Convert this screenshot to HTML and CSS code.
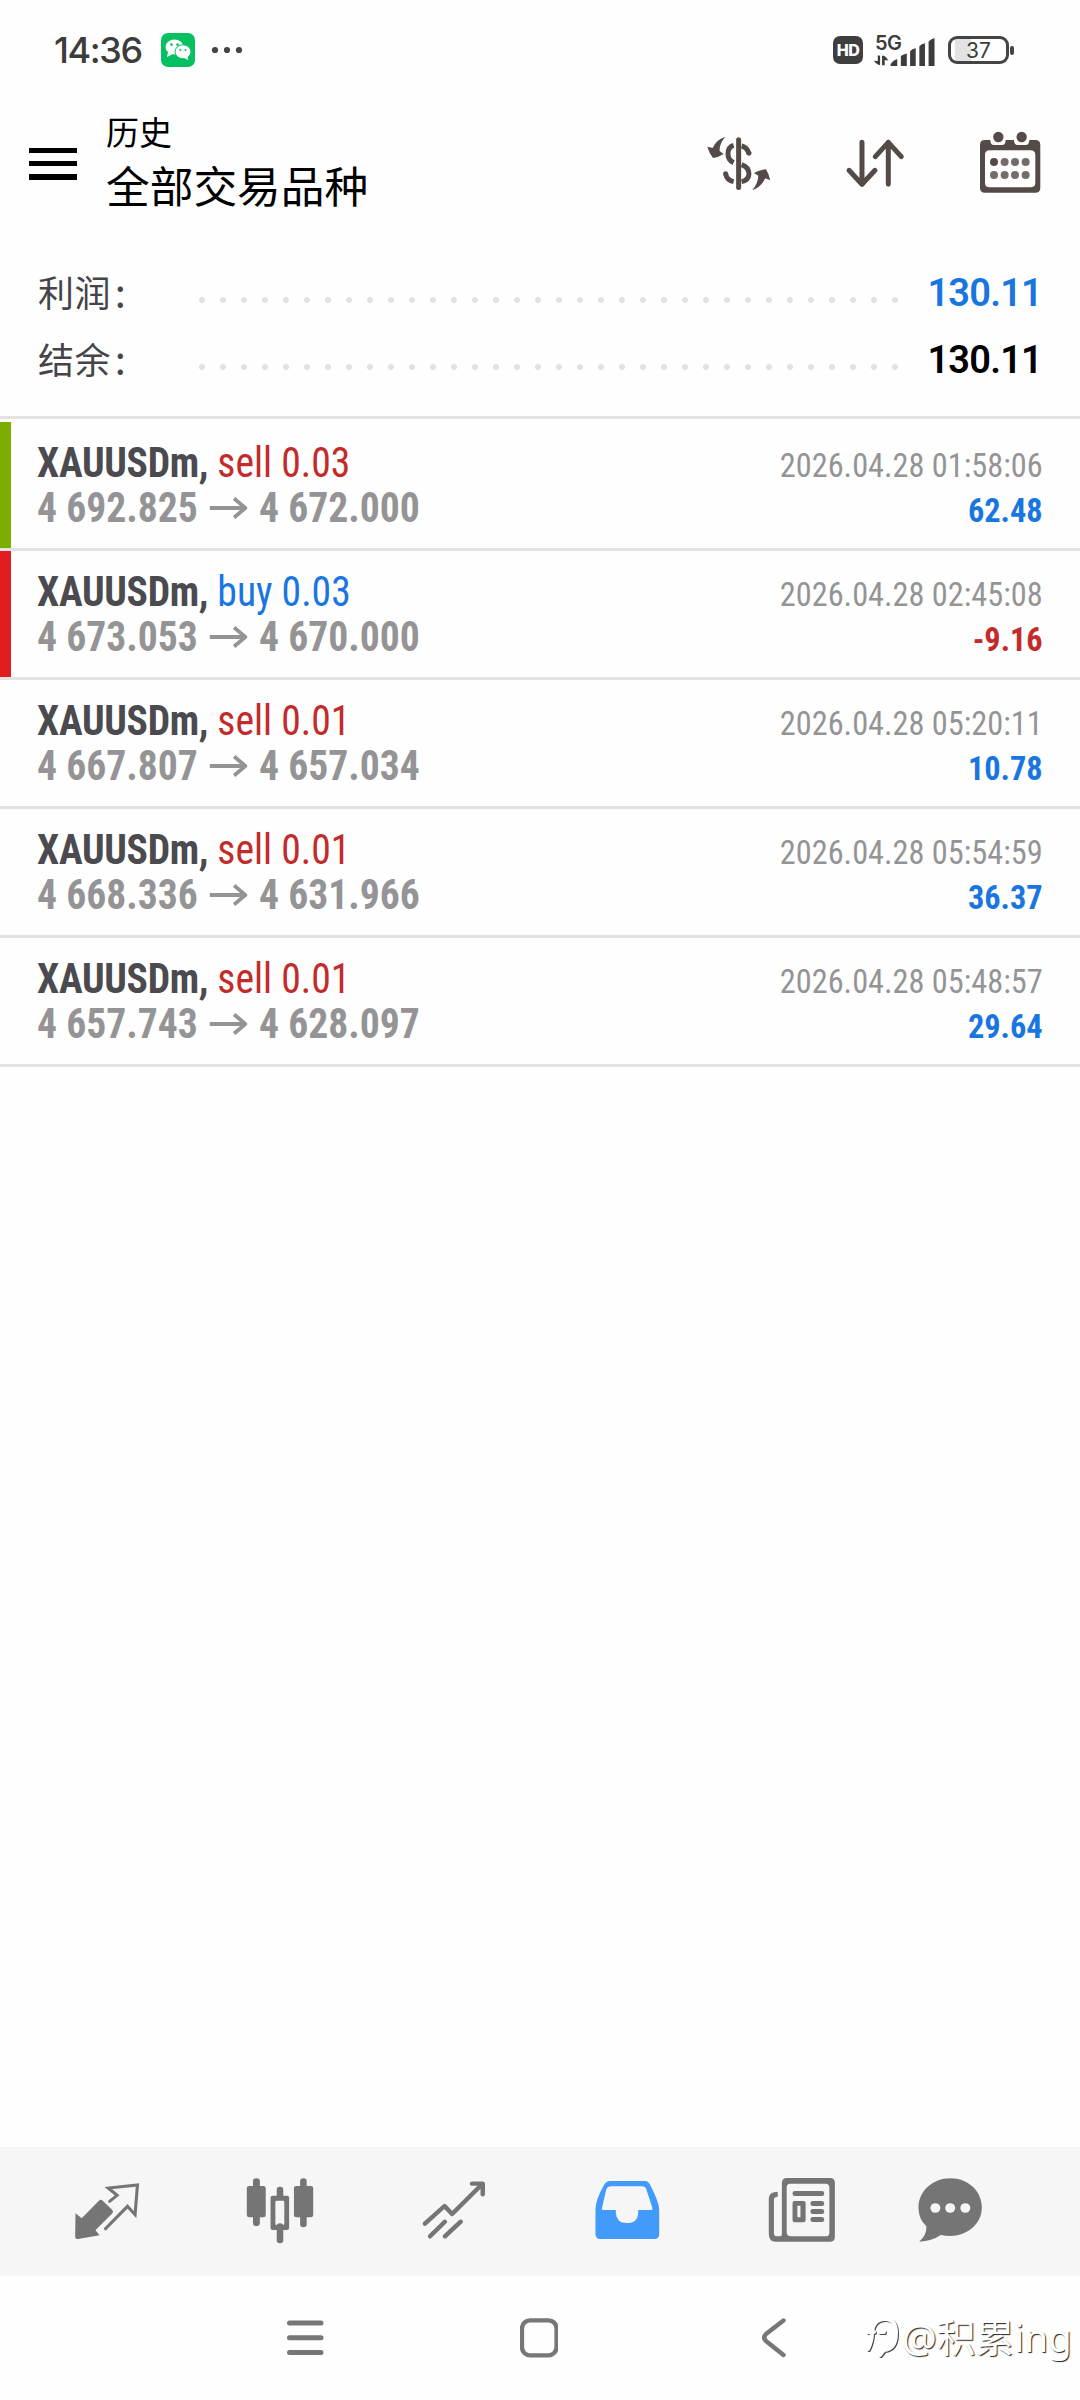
FILE: index.html
```html
<!DOCTYPE html>
<html lang="zh-CN">
<head>
<meta charset="utf-8">
<title>历史</title>
<link rel="stylesheet" href="styles.css">
</head>
<body>
<div class="screen">
  <div class="status">
    <span class="clock">14:36</span>
    <svg class="wechat" viewBox="0 0 34 34"><rect width="34" height="34" rx="7" fill="#07c05f"/><ellipse cx="13.5" cy="14" rx="9" ry="7.5" fill="#fff"/><path d="M7 19l-1 5 5-2.5z" fill="#fff"/><ellipse cx="22" cy="18.8" rx="8" ry="7" fill="#fff" stroke="#07c05f" stroke-width="1"/><path d="M23 25l4 2-.5-4z" fill="#fff"/><g fill="#07c05f"><circle cx="10.5" cy="11.6" r="1.3"/><circle cx="16.5" cy="11.6" r="1.3"/><circle cx="19.3" cy="17" r="1.1"/><circle cx="24.6" cy="17" r="1.1"/></g></svg>
    <svg class="more" viewBox="0 0 32 8"><g fill="#444"><circle cx="4" cy="4" r="3.1"/><circle cx="16" cy="4" r="3.1"/><circle cx="28" cy="4" r="3.1"/></g></svg>
    <span class="hd">HD</span>
    <div class="signal">
      <span class="net">5G</span>
      <svg class="bars" viewBox="580 95 190 100"><g fill="#3c3c3c"><path d="M633 192V186q8-12 20-15v21zM664 192v-30q8-6 18-8v38zM692 192v-45q6-7 17-9v54zM720 192v-60q6-7 17-9v69zM748 192v-74q6-8 18-11v85zM594 160h7v29h-4q-9-4-15-13l12 1zM607 161h6q8 5 13 14l-11-1v16h-8z"/></g></svg>
    </div>
    <div class="battery"><span>37</span></div>
  </div>

  <header class="header">
    <div class="menu"><i></i><i></i><i></i></div>
    <div class="titles"><span class="small">历史</span><span class="big">全部交易品种</span></div>
    <div class="actions">
      <svg class="ic-money" viewBox="80 390 200 190" fill="none" stroke="#544a48">
        <path d="M178 419V563" stroke-width="15" stroke-linecap="round"/>
        <path d="M163 436Q145 441 146 463Q147 481 163 488M187 438Q204 442 209 461M139 522Q143 541 163 545M187 494Q209 502 209 522Q208 541 187 545" stroke-width="15"/>
        <circle cx="209" cy="460" r="7.5" fill="#544a48" stroke="none"/><circle cx="139" cy="521" r="7.5" fill="#544a48" stroke="none"/>
        <path d="M138 411Q113 417 100 444L84 440Q89 458 101 474Q118 472 133 462L121 453Q120 430 138 411ZM219 570Q245 562 258 535L273 541Q270 523 260 508Q242 508 224 519L237 527Q237 549 219 570Z" fill="#544a48" stroke="none"/>
      </svg>
      <svg class="ic-sort" viewBox="490 390 190 190" fill="none" stroke="#544a48" stroke-width="15" stroke-linecap="round" stroke-linejoin="round"><path d="M547 427V552M508 511L547 553L586 511M626 553V427M587 470L626 427L665 470"/></svg>
      <svg class="ic-cal" viewBox="895 390 190 190" fill="#544a48">
        <path fill-rule="evenodd" d="M916 420H932Q932 435 943 435H967Q978 435 978 420H1003Q1003 435 1014 435H1038Q1049 435 1049 420H1067Q1082 420 1082 435V563Q1082 578 1067 578H916Q901 578 901 563V435Q901 420 916 420ZM930 451Q916 451 916 465V548Q916 562 930 562H1053Q1067 562 1067 548V465Q1067 451 1053 451Z"/>
        <circle cx="956" cy="411" r="15.5"/><circle cx="1026" cy="411" r="15.5"/><circle cx="943" cy="486" r="12"/>
        <g fill="#746c68"><circle cx="975" cy="486" r="12"/><circle cx="1006" cy="486" r="12"/><circle cx="1038" cy="486" r="12"/><circle cx="943" cy="525" r="12"/><circle cx="975" cy="525" r="12"/><circle cx="1006" cy="525" r="12"/><circle cx="1038" cy="525" r="12"/></g>
      </svg>
    </div>
  </header>

  <section class="summary">
    <div class="sum"><span class="label">利润<span class="colon">:</span></span><span class="dots"></span><b class="blue">130.11</b></div>
    <div class="sum"><span class="label">结余<span class="colon">:</span></span><span class="dots"></span><b>130.11</b></div>
  </section>

  <main class="deals">
    <div class="deal win">
      <div class="line"><span class="sym"><b>XAUUSDm,</b> <span class="red">sell 0.03</span></span><span class="date">2026.04.28 01:58:06</span></div>
      <div class="line two"><span class="price"><b>4 692.825</b><svg class="arr" viewBox="0 0 40 22"><path d="M0 11H38M26 1.5L38 11L26 20.500"/></svg><b>4 672.000</b></span><b class="pl blue">62.48</b></div>
    </div>
    <div class="deal loss">
      <div class="line"><span class="sym"><b>XAUUSDm,</b> <span class="blue">buy 0.03</span></span><span class="date">2026.04.28 02:45:08</span></div>
      <div class="line two"><span class="price"><b>4 673.053</b><svg class="arr" viewBox="0 0 40 22"><path d="M0 11H38M26 1.5L38 11L26 20.500"/></svg><b>4 670.000</b></span><b class="pl red">-9.16</b></div>
    </div>
    <div class="deal">
      <div class="line"><span class="sym"><b>XAUUSDm,</b> <span class="red">sell 0.01</span></span><span class="date">2026.04.28 05:20:11</span></div>
      <div class="line two"><span class="price"><b>4 667.807</b><svg class="arr" viewBox="0 0 40 22"><path d="M0 11H38M26 1.5L38 11L26 20.500"/></svg><b>4 657.034</b></span><b class="pl blue">10.78</b></div>
    </div>
    <div class="deal">
      <div class="line"><span class="sym"><b>XAUUSDm,</b> <span class="red">sell 0.01</span></span><span class="date">2026.04.28 05:54:59</span></div>
      <div class="line two"><span class="price"><b>4 668.336</b><svg class="arr" viewBox="0 0 40 22"><path d="M0 11H38M26 1.5L38 11L26 20.500"/></svg><b>4 631.966</b></span><b class="pl blue">36.37</b></div>
    </div>
    <div class="deal">
      <div class="line"><span class="sym"><b>XAUUSDm,</b> <span class="red">sell 0.01</span></span><span class="date">2026.04.28 05:48:57</span></div>
      <div class="line two"><span class="price"><b>4 657.743</b><svg class="arr" viewBox="0 0 40 22"><path d="M0 11H38M26 1.5L38 11L26 20.500"/></svg><b>4 628.097</b></span><b class="pl blue">29.64</b></div>
    </div>
  </main>

  <nav class="tabs">
    <svg preserveAspectRatio="none" viewBox="205 135 215 215"><path d="M221 250L239 265L289 212Q295 207 300 212L328 240Q332 245 328 250L279 301L291 316L228 327Q220 328 220 320Z" fill="#757575"/><path d="M320 214L342 196L316 174L401 165L394 254L372 229L308 296" fill="none" stroke="#757575" stroke-width="9" stroke-linecap="round"/></svg>
    <svg preserveAspectRatio="none" viewBox="706 135 215 215" fill="#757575"><rect x="735" y="145" width="20" height="143" rx="9"/><rect x="717" y="168" width="55" height="94" rx="7"/><rect x="872" y="145" width="19" height="147" rx="9"/><rect x="854" y="168" width="56" height="94" rx="7"/><rect x="804" y="170" width="19" height="40" rx="9"/><rect x="804" y="280" width="19" height="60" rx="9"/><path fill-rule="evenodd" d="M792 197H834Q840 197 840 203V294Q840 300 834 300H792Q786 300 786 294V203Q786 197 792 197ZM804 212Q800 212 800 216V281Q800 285 804 285H822Q826 285 826 281V216Q826 212 822 212Z"/></svg>
    <svg preserveAspectRatio="none" viewBox="1208 135 215 215" fill="none" stroke="#757575" stroke-width="13" stroke-linecap="round" stroke-linejoin="round"><path d="M1231 281L1288 228L1310 252L1394 166M1246 319L1289 275M1289 319L1335 275M1368 161H1399V193"/><path d="M1385 160h15v20z" fill="#757575" stroke-width="6"/></svg>
    <svg preserveAspectRatio="none" viewBox="145 135 215 215"><path fill-rule="evenodd" fill="#429bfb" d="M201 153H306Q314 153 318 161Q346 215 346 239V313Q346 327 332 327H175Q161 327 161 313V239Q161 207 188 161Q193 153 201 153ZM207 169Q196 169 192 179L180 233Q178 240 184 240H220V248Q222 279 252 279Q284 279 285 248V240H322Q328 240 326 233L309 179Q305 169 297 169Z"/></svg>
    <svg class="news" preserveAspectRatio="none" viewBox="653 135 215 215"><path fill="#757575" fill-rule="evenodd" d="M717 144H842Q856 144 856 158V321Q856 335 842 335H684Q664 335 664 312V204Q666 185 690 185V200Q679 201 679 208V311Q680 319 688 319H697Q702 319 702 312V158Q702 144 717 144ZM726 161Q716 161 716 172V306Q716 319 729 319H829Q840 319 840 308V172Q840 161 829 161Z"/><g fill="#757575"><rect x="733" y="183" width="92" height="15" rx="7"/><path fill-rule="evenodd" d="M739 213H765Q771 213 771 219V271Q771 277 765 277H739Q733 277 733 271V219Q733 213 739 213ZM747 227V262H756V227Z"/><rect x="785" y="213" width="40" height="15" rx="7"/><rect x="785" y="237" width="40" height="15" rx="7"/><rect x="785" y="261" width="40" height="15" rx="7"/></g></svg>
    <svg class="last" preserveAspectRatio="none" viewBox="1085 135 215 215"><path fill="#757575" d="M1193 145C1246 145 1285 184 1285 232C1285 285 1239 318 1194 318Q1179 318 1166 315Q1140 333 1103 335Q1125 316 1124 289C1107 272 1101 254 1101 232C1101 184 1142 145 1193 145Z"/><g fill="#f6f6f6"><circle cx="1150" cy="234" r="14.5"/><circle cx="1193" cy="234" r="14.5"/><circle cx="1237" cy="234" r="14.5"/></g></svg>
  </nav>

  <div class="sysnav">
    <svg class="recent" viewBox="0 0 37 36" stroke="#777" stroke-width="5" stroke-linecap="round"><path d="M2.5 3H34M2.5 17.8H34M2.5 32.5H34"/></svg>
    <svg class="home" viewBox="0 0 38 40"><rect x="2" y="2.3" width="34.5" height="35" rx="8" fill="none" stroke="#777" stroke-width="4.3"/></svg>
    <svg class="back" viewBox="0 0 24 40"><path d="M21.500 2.500L4 16Q.5 19.500 4 23L21.500 37" fill="none" stroke="#777" stroke-width="4.4" stroke-linecap="round"/></svg>
    <div class="mark">
      <svg viewBox="0 0 36 46" fill="none" stroke-linecap="round"><path stroke="#444" stroke-width="4" d="M5 36Q9 28 9 20Q10 6 22 6Q33 6 33 20Q33 36 21 37L17 42M5 19H11M17 19H21"/><path transform="translate(-1 -1)" stroke="#fff" stroke-width="4" d="M5 36Q9 28 9 20Q10 6 22 6Q33 6 33 20Q33 36 21 37L17 42M5 19H11M17 19H21"/></svg>
      <span>@积累ing</span>
    </div>
  </div>
</div>
</body>
</html>
```
FILE: styles.css
```css
* { box-sizing: border-box; }
body { margin: 0; background: #fefefe; }
svg { display: block; flex: none; }
.screen { width: 1080px; height: 2400px; display: flex; flex-direction: column; overflow: hidden; font-family: Roboto, "Noto Sans CJK SC", sans-serif; color: #000; }
.red { color: #c32b2b; }
.blue { color: #1976e0; }

.status { height: 100px; display: flex; align-items: center; padding-left: 54px; color: #3c3c3c; }
.clock { width: 107px; font: 500 36px/40px Inter, sans-serif; letter-spacing: -1.400px; }
.wechat { width: 34px; height: 34px; }
.more { width: 32px; height: 8px; margin-left: 16px; }
.hd { width: 30px; height: 28px; margin-left: 590px; border-radius: 7px; background: #3f3f3f; color: #fff; font: 800 16px/28px Inter, sans-serif; text-align: center; letter-spacing: -.5px; }
.signal { position: relative; width: 63px; height: 33px; margin-left: 10px; }
.net { position: absolute; left: 2px; top: -1px; font: 600 20px/20px Inter, sans-serif; letter-spacing: -.5px; }
.bars { width: 63px; height: 33px; }
.battery { position: relative; width: 61px; height: 28px; margin-left: 12px; border: 3px solid #444; border-radius: 9px; background: linear-gradient(90deg, transparent 4px, #e3e3e3 4px 20px, transparent 20px); font: 400 21px/23px Inter, sans-serif; text-align: center; }
.battery::after { content: ""; position: absolute; left: 59px; top: 7px; width: 4px; height: 9px; border-radius: 2px; background: #444; }

.header { height: 126px; display: flex; padding-left: 29px; }
.menu { width: 48px; padding-top: 48px; display: flex; flex-direction: column; gap: 8px; }
.menu i { height: 5.200px; background: #000; }
.titles { margin-left: 29px; width: 300px; display: flex; flex-direction: column; padding-top: 11px; font-family: "Noto Sans CJK SC", sans-serif; font-weight: 400; }
.small { font-size: 33px; line-height: 40px; }
.big { font-size: 43.700px; line-height: 52px; margin-top: 7px; }
.actions { display: flex; padding-top: 30px; margin-left: 300px; }
.ic-money { width: 66.600px; height: 63.300px; }
.ic-sort { width: 63.300px; height: 63.300px; margin-left: 70px; }
.ic-cal { width: 63.300px; height: 63.300px; margin-left: 71.700px; }

.summary { height: 193px; padding: 32px 38px 0 38px; border-bottom: 3px solid #e3e3e3; }
.sum { display: flex; align-items: center; height: 67px; }
.label { width: 161px; font: 400 36px/66px "Noto Sans CJK SC", sans-serif; color: #444449; letter-spacing: .4px; margin-top: -2px; }
.colon { margin-left: 4px; font-size: 40px; line-height: 1; }
.dots { width: 714px; height: 6px; margin-top: 17px; background: radial-gradient(circle at 3px 3px, #e2e2e2 2.700px, transparent 3.300px) 0 0 / 21px 6px; }
.sum b { margin-left: auto; font-size: 38px; font-weight: 600; letter-spacing: -.8px; padding-top: 2px; }

.deals { padding-top: 3px; flex: 1; }
.deal { height: 129px; padding: 18px 37px 0 37px; border-bottom: 3px solid #e3e3e3; }
.win, .loss { background: linear-gradient(#7cae00, #7cae00) 0 0 / 11px 126px no-repeat; background-origin: padding-box; }
.loss { background-image: linear-gradient(#e11e1e, #e11e1e); }
.line { display: flex; justify-content: space-between; height: 45px; line-height: 45px; font-size: 42px; font-family: "Roboto Condensed", Roboto, sans-serif; font-stretch: 75%; white-space: nowrap; color: #949496; }
.sym, .price { transform: scaleX(.943); transform-origin: left; }
.sym b { color: #4a4a4f; letter-spacing: -.3px; }
.date, .pl { font-size: 34px; padding-top: 3px; transform: scaleX(.95); transform-origin: right; }
.price { display: flex; align-items: center; }
.arr { width: 40px; height: 22px; margin: 0 12.500px; fill: none; stroke: #949496; stroke-width: 4; }

.tabs { height: 129px; background: #f6f6f6; display: flex; gap: 99.200px; padding: 28px 0 0 70.300px; }
.tabs svg { width: 74px; height: 71.700px; }
.tabs .news { margin-left: 1.700px; }
.tabs .last { margin-left: -24.600px; }

.sysnav { height: 124px; display: flex; padding-top: 41px; }
.recent { width: 37px; height: 36px; margin: 3px 0 0 287px; }
.home { width: 38px; height: 40px; margin: 1px 0 0 196px; }
.back { width: 24px; height: 40px; margin: 1px 0 0 204px; }
.mark { display: flex; margin: -3px 0 0 78px; color: #fff; font: 400 38.700px/46px "Noto Sans", "Noto Sans CJK SC", sans-serif; text-shadow: 1px 1px 1px #222; white-space: nowrap; }
.mark svg { width: 36px; height: 46px; margin-right: 2px; }
```
